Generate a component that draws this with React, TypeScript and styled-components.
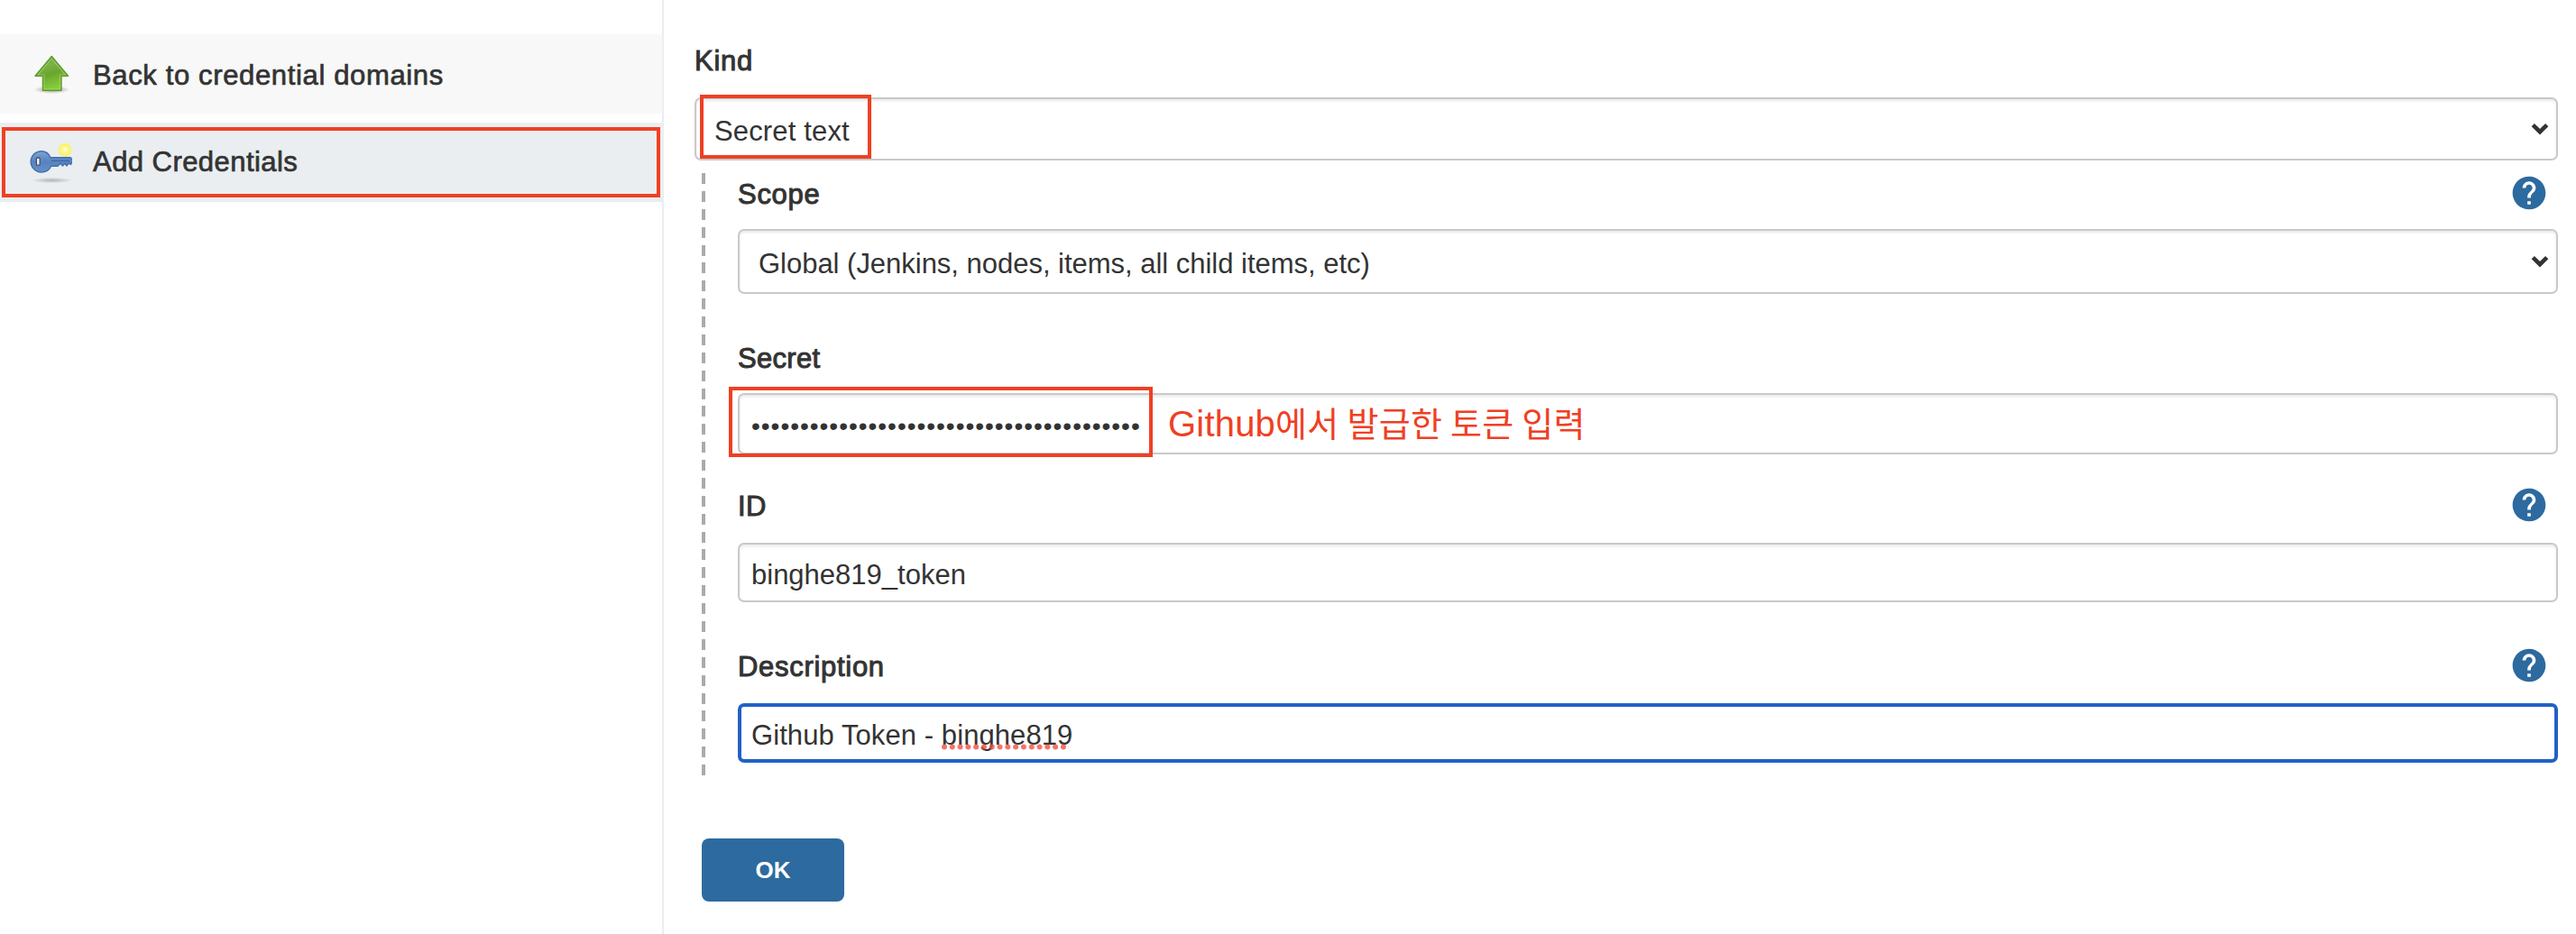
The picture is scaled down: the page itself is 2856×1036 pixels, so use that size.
import React from "react";
import styled, { createGlobalStyle } from "styled-components";

const RED = "#ef4023";
const INK = "#333333";
const BLUE = "#2d6a9f";

const GlobalStyle = createGlobalStyle`
  *, *::before, *::after { box-sizing: border-box; }
  body {
    margin: 0;
    background: #fff;
    color: ${INK};
    font-family: "Liberation Sans", "Noto Sans CJK KR", sans-serif;
    font-size: 31px;
    line-height: 44px;
  }
`;

const Page = styled.div`
  display: flex;
  height: 1036px;
  overflow: hidden;
`;

const Sidebar = styled.nav`
  width: 736px;
  flex: none;
  display: flex;
  flex-direction: column;
  gap: 10px;
  padding-top: 38px;
  border-right: 2px solid #eaeef2;
`;

const Task = styled.a<{ $active?: boolean }>`
  position: relative;
  display: flex;
  align-items: center;
  gap: 23px;
  height: 88px;
  padding-left: 32px;
  background: ${(p) => (p.$active ? "#eaeef1" : "#f8f8f8")};
`;

const TaskIcon = styled.svg`
  width: 48px;
  height: 48px;
  flex: none;
`;

const TaskLabel = styled.span<{ $drop: number; $spacing: number }>`
  padding-top: ${(p) => p.$drop}px;
  letter-spacing: ${(p) => p.$spacing}px;
  -webkit-text-stroke: 0.7px ${INK};
`;

const Mark = styled.div<{ $x: number; $y: number; $w: number; $h: number }>`
  position: absolute;
  left: ${(p) => p.$x}px;
  top: ${(p) => p.$y}px;
  width: ${(p) => p.$w}px;
  height: ${(p) => p.$h}px;
  border: 4px solid ${RED};
`;

const Main = styled.main`
  flex: 1;
  display: flex;
  flex-direction: column;
  align-items: stretch;
  padding: 44px 20px 0 34px;
`;

const Field = styled.section<{ $gap: number; $before?: number }>`
  display: flex;
  flex-direction: column;
  gap: ${(p) => p.$gap}px;
  margin-top: ${(p) => p.$before ?? 0}px;
`;

const LabelRow = styled.div`
  display: flex;
  justify-content: space-between;
  height: 44px;
  padding-right: 10px;
`;

const Label = styled.label<{ $spacing?: number }>`
  padding-top: 2px;
  white-space: nowrap;
  letter-spacing: ${(p) => p.$spacing ?? 0.7}px;
  -webkit-text-stroke: 1px ${INK};
`;

const Box = styled.div<{ $h: number; $pad?: number; $focus?: boolean }>`
  position: relative;
  display: flex;
  align-items: center;
  justify-content: space-between;
  height: ${(p) => p.$h}px;
  padding: 6px 8px 0 ${(p) => (p.$pad ?? 15) - (p.$focus ? 4 : 2)}px;
  border: ${(p) => (p.$focus ? "4px solid #2160c8" : "2px solid #c9c9c9")};
  border-radius: 7px;
  background: #fff;
  box-shadow: ${(p) => (p.$focus ? "none" : "inset 0 2px 3px rgba(0, 0, 0, 0.09)")};
`;

const Value = styled.span<{ $spacing?: number }>`
  white-space: pre;
  letter-spacing: ${(p) => p.$spacing ?? 0}px;
`;

const Dots = styled(Value)`
  font-size: 28px;
`;

const Misspelt = styled.span`
  position: relative;
  display: inline-block;
  &::after {
    content: "";
    position: absolute;
    left: 0;
    top: 31px;
    width: 141px;
    height: 7px;
    background: radial-gradient(circle at 3px 3.5px, rgba(238, 80, 66, 0.8) 2.6px, transparent 3.4px) 0 0 / 8.8px 7px repeat-x;
  }
`;

const Arrow = styled.svg`
  width: 20px;
  height: 14px;
  flex: none;
  margin-top: -6px;
`;

const Help = styled.svg`
  width: 44px;
  height: 44px;
  fill: ${BLUE};
`;

const Group = styled.div`
  margin: 14px 0 0 8px;
  padding: 0 0 14px 40px;
  background: repeating-linear-gradient(to bottom, #aaa 0 12px, transparent 12px 19.88px) 0 0 / 4px 100% no-repeat;
`;

const Note = styled.div`
  position: absolute;
  left: 475px;
  top: 7px;
  white-space: pre;
  color: ${RED};
  font-size: 40px;
  line-height: 46px;
  letter-spacing: 0.2px;
`;

const Hangul = styled.span`
  font-family: "Noto Sans CJK KR", sans-serif;
  font-size: 38px;
  letter-spacing: 0.3px;
`;

const Submit = styled.button`
  width: 158px;
  height: 70px;
  margin: 70px 0 0 8px;
  padding: 0;
  border: 0;
  border-radius: 8px;
  background: ${BLUE};
  color: #fff;
  font: bold 26px/70px "Liberation Sans", sans-serif;
`;

const UpIcon = () => (
  <TaskIcon viewBox="0 0 48 48">
    <defs>
      <linearGradient id="up" x1="0" y1="0" x2="0.3" y2="1">
        <stop offset="0" stopColor="#6a9a48" />
        <stop offset="0.35" stopColor="#7db246" />
        <stop offset="0.6" stopColor="#69a52f" />
        <stop offset="1" stopColor="#86cc3a" />
      </linearGradient>
      <radialGradient id="shade">
        <stop offset="0" stopColor="#000" stopOpacity="0.4" />
        <stop offset="1" stopColor="#000" stopOpacity="0" />
      </radialGradient>
    </defs>
    <ellipse cx="25.5" cy="41.5" rx="20" ry="4.5" fill="url(#shade)" />
    <path d="M25.3 4.5 43.5 26.2H36V42.3H15.5V26.2H7Z" fill="url(#up)" stroke="#5f9730" strokeWidth="1.4" strokeLinejoin="round" />
    <path d="M25.3 7 40.5 25H34.6V40.8H17V25H10Z" fill="none" stroke="#a6dc6c" strokeOpacity="0.55" strokeWidth="1.2" />
  </TaskIcon>
);

const KeyIcon = () => (
  <TaskIcon viewBox="0 0 48 48">
    <defs>
      <radialGradient id="glow">
        <stop offset="0" stopColor="#fffef0" />
        <stop offset="0.25" stopColor="#fff9a0" />
        <stop offset="0.7" stopColor="#fbf26a" />
        <stop offset="1" stopColor="#fbf26a" stopOpacity="0" />
      </radialGradient>
      <linearGradient id="steel" x1="0" y1="0" x2="0" y2="1">
        <stop offset="0" stopColor="#7ea3d4" />
        <stop offset="0.5" stopColor="#5583c0" />
        <stop offset="1" stopColor="#6790c8" />
      </linearGradient>
      <radialGradient id="floor">
        <stop offset="0" stopColor="#000" stopOpacity="0.25" />
        <stop offset="1" stopColor="#000" stopOpacity="0" />
      </radialGradient>
    </defs>
    <ellipse cx="25.5" cy="44" rx="23" ry="3.2" fill="url(#floor)" />
    <circle cx="40" cy="10.3" r="8.6" fill="url(#glow)" />
    <path
      d="M13.8 11.7C18.8 11.7 22.3 14.6 24 18.7H46.2L49 22.5 46.2 26.5 44 25 42 28 39.8 25.3 37.5 28 35 25.3 32 28.2H24.8C22.8 32.4 18.8 35 13.8 35A11.6 11.6 0 0 1 13.8 11.7Z"
      fill="url(#steel)"
      stroke="#456fa9"
      strokeWidth="1.4"
      strokeLinejoin="round"
    />
    <path d="M25 22.3H45" stroke="#3f689f" strokeWidth="1.3" />
    <rect x="8.4" y="19" width="3.8" height="8.2" rx="1" fill="#eef1f4" stroke="#3c4f6b" strokeWidth="1.3" />
  </TaskIcon>
);

const HelpIcon = () => (
  <Help viewBox="0 0 24 24">
    <path d="M12 2C6.48 2 2 6.48 2 12s4.48 10 10 10 10-4.48 10-10S17.52 2 12 2zm1 17h-2v-2h2v2zm2.07-7.75l-.9.92C13.45 12.9 13 13.5 13 15h-2v-.5c0-1.1.45-2.1 1.17-2.83l1.24-1.26c.37-.36.59-.86.59-1.41 0-1.1-.9-2-2-2s-2 .9-2 2H8c0-2.21 1.79-4 4-4s4 1.79 4 4c0 .88-.36 1.68-.93 2.25z" />
  </Help>
);

const SelectArrow = () => (
  <Arrow viewBox="0 0 20 14">
    <path d="M2.3 2.7 10 10.2 17.7 2.7" fill="none" stroke={INK} strokeWidth="4.6" />
  </Arrow>
);

export default function App() {
  return (
    <>
      <GlobalStyle />
      <Page>
        <Sidebar>
          <Task>
            <UpIcon />
            <TaskLabel $drop={4} $spacing={0.64}>Back to credential domains</TaskLabel>
          </Task>
          <Task $active>
            <KeyIcon />
            <TaskLabel $drop={0} $spacing={0.45}>Add Credentials</TaskLabel>
            <Mark $x={2} $y={5} $w={730} $h={78} />
          </Task>
        </Sidebar>
        <Main>
          <Field $gap={20}>
            <LabelRow>
              <Label>Kind</Label>
            </LabelRow>
            <Box $h={70} $pad={22}>
              <Value $spacing={0.15}>Secret text</Value>
              <SelectArrow />
              <Mark $x={4} $y={-5} $w={190} $h={71} />
            </Box>
          </Field>
          <Group>
            <Field $gap={18}>
              <LabelRow>
                <Label>Scope</Label>
                <HelpIcon />
              </LabelRow>
              <Box $h={72} $pad={23}>
                <Value $spacing={-0.02}>Global (Jenkins, nodes, items, all child items, etc)</Value>
                <SelectArrow />
              </Box>
            </Field>
            <Field $gap={18} $before={48}>
              <LabelRow>
                <Label $spacing={0.3}>Secret</Label>
              </LabelRow>
              <Box $h={68}>
                <Dots $spacing={0.99}>{"•".repeat(40)}</Dots>
                <Mark $x={-12} $y={-9} $w={470} $h={78} />
                <Note>
                  Github<Hangul>에서 발급한 토큰 입력</Hangul>
                </Note>
              </Box>
            </Field>
            <Field $gap={20} $before={34}>
              <LabelRow>
                <Label $spacing={0.3}>ID</Label>
                <HelpIcon />
              </LabelRow>
              <Box $h={66}>
                <Value>binghe819_token</Value>
              </Box>
            </Field>
            <Field $gap={20} $before={48}>
              <LabelRow>
                <Label>Description</Label>
                <HelpIcon />
              </LabelRow>
              <Box $h={66} $focus>
                <Value $spacing={0.08}>
                  Github Token - <Misspelt>binghe819</Misspelt>
                </Value>
              </Box>
            </Field>
          </Group>
          <Submit>OK</Submit>
        </Main>
      </Page>
    </>
  );
}
